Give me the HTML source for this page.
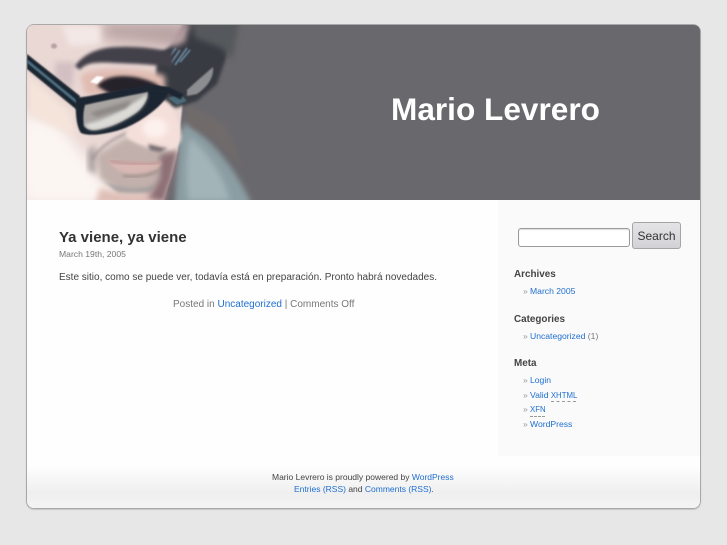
<!DOCTYPE html>
<html><head><meta charset="utf-8"><title>Mario Levrero</title>
<style>
html,body{margin:0;padding:0;width:727px;height:545px;overflow:hidden;background:#e7e7e7;font-family:"Liberation Sans",sans-serif;}
#card{position:absolute;left:26px;top:24px;width:675px;height:485px;background:#fefefe;border-radius:8px;box-shadow:inset 0 0 0 1px #a8a8a8,0 1px 1px #c4c4c4;overflow:hidden;}
#hdr{position:absolute;left:27px;top:25px;width:673px;height:175px;background:#69686d;overflow:hidden;border-radius:6px 6px 0 0;}
#side{position:absolute;left:498px;top:200px;width:202px;height:256px;background:#fafafa;}
#foot{position:absolute;left:27px;top:466px;width:673px;height:42px;background:linear-gradient(#fefefe,#f7f7f8 30%,#efeff0 65%,#f3f3f3);border-radius:0 0 7px 7px;}
.t{position:absolute;white-space:nowrap;line-height:1;filter:blur(.25px);}
a{color:#1f6fd0;text-decoration:none;}
#box{position:absolute;left:518px;top:228px;width:110px;height:17px;border:1px solid #9a9a9a;border-radius:3px;background:#fff;box-shadow:inset 0 1px 1px #ddd;}
#btn{position:absolute;left:632px;top:222px;width:47px;height:25px;border:1px solid #a5a5a8;border-radius:3px;background:linear-gradient(#e4e4e6,#d2d2d6);color:#333;font-size:12px;text-align:center;line-height:26px;filter:blur(.2px);}
.d{position:absolute;height:0;border-top:1px dashed #999;}
</style></head><body>
<div id="card"></div>
<div id="hdr">
<svg width="240" height="175" viewBox="27 25 240 175" style="position:absolute;left:0;top:0">
<defs>
<filter id="b0" x="-30%" y="-30%" width="160%" height="160%"><feGaussianBlur stdDeviation=".8"/></filter>
<filter id="b1" x="-30%" y="-30%" width="160%" height="160%"><feGaussianBlur stdDeviation="1.5"/></filter>
<filter id="b2" x="-30%" y="-30%" width="160%" height="160%"><feGaussianBlur stdDeviation="3"/></filter>
<filter id="b3" x="-40%" y="-40%" width="180%" height="180%"><feGaussianBlur stdDeviation="7"/></filter>
</defs>
<!-- shirt -->
<path d="M175 205L178 135L186 122C205 135 232 160 252 205Z" fill="#8b9ea3" filter="url(#b2)"/>
<path d="M188 200C185 170 187 150 190 138C205 150 222 172 230 200Z" fill="#a3b4b8" filter="url(#b2)"/>
<path d="M186 104L226 125L244 170L215 140L188 125Z" fill="#716b6a" filter="url(#b2)"/>
<!-- skin base -->
<path d="M20 18H190L182 110L178 150L172 175L162 205H20Z" fill="#ead8d4" filter="url(#b0)"/>
<path d="M100 22H190L180 48L130 42L105 40Z" fill="#b8a2a3" filter="url(#b3)"/>
<path d="M62 26L100 26L100 44L70 46Z" fill="#f3e8e6" filter="url(#b2)"/>
<path d="M20 110L60 125L80 150L120 205H20Z" fill="#fcf6f3" filter="url(#b3)"/>
<path d="M27 75L70 112L75 135L30 115Z" fill="#f5e4da" filter="url(#b2)"/>
<ellipse cx="54" cy="46" rx="3" ry="2.6" fill="#b9a2a2" filter="url(#b0)"/>
<path d="M55 62L75 62L72 90L55 78Z" fill="#d2bfc2" filter="url(#b2)"/>
<!-- stubble, jaw -->
<path d="M96 155L127 137L150 148L172 152L168 178L150 194L122 193L100 178Z" fill="#c1b0ab" filter="url(#b2)"/>
<path d="M88 150L95 145L96 175L88 170Z" fill="#aba1a1" filter="url(#b2)"/>
<path d="M103 180C115 188 140 192 155 184L150 193L118 193Z" fill="#a4a0a1" filter="url(#b1)"/>
<path d="M100 188C125 196 145 197 165 190L162 204H95Z" fill="#dfbfb7" filter="url(#b2)"/>
<path d="M160 155L178 150L172 178L164 202L148 198L160 178Z" fill="#8c7076" filter="url(#b2)"/>
<!-- lips -->
<path d="M107 160C125 163 145 162 162 162C158 170 146 174 130 174C118 173 112 166 107 160Z" fill="#d9b7b3" filter="url(#b1)"/>
<path d="M110 161C125 164 145 165 160 163" stroke="#a57270" stroke-width="1.2" fill="none" filter="url(#b1)"/>
<path d="M123 176C135 177 148 176 158 171" stroke="#8a7675" stroke-width="1.5" fill="none" filter="url(#b1)"/>
<path d="M127 133C110 140 97 150 92 160" stroke="#968c8e" stroke-width="2" fill="none" filter="url(#b1)"/>
<!-- dark mass: hair + right lens -->
<path d="M186 20H230L227 55L217 84L197 101L176 108L160 102L155 78L158 55L176 42Z" fill="#383b42" filter="url(#b1)"/>
<path d="M190 18H240L232 60L222 48L195 38Z" fill="#55585b" filter="url(#b2)"/>
<path d="M172 38L185 22H190L185 42L172 48Z" fill="#b69fa2" filter="url(#b2)"/>
<path d="M171 63L180 50M175 65L187 48M170 56L176 48M180 62L190 50" stroke="#6d8ea8" stroke-width="1.6" fill="none" filter="url(#b0)"/>
<path d="M187 90L198 80L213 67C214 75 210 85 197 94L187 96Z" fill="#8b8d90" filter="url(#b0)"/>
<path d="M168 98L177 105L187 101L180 94Z" fill="#4c6a78" filter="url(#b0)"/>
<!-- eyebrow -->
<path d="M75 66C82 56 95 48 115 47C135 46 155 48 172 52L172 68C155 64 135 64 115 63C98 62 86 62 80 70Z" fill="#423f4a" filter="url(#b1)"/>
<path d="M80 75C95 67 125 68 150 71L165 76V92L110 96L85 94Z" fill="#e0bcb2" filter="url(#b2)"/>
<!-- eye -->
<path d="M97 86C105 76 120 75 135 77C145 79 155 82 162 88L110 94Z" fill="#25232b" filter="url(#b1)"/>
<path d="M90 82L97 76L104 77L97 84Z" fill="#fff" filter="url(#b0)"/>
<!-- nose -->
<path d="M152 104C158 98 165 98 170 104C177 118 182 130 181 140C178 148 170 150 160 149C150 147 134 144 126 136C125 130 138 122 152 104Z" fill="#f5dfda" filter="url(#b1)"/>
<ellipse cx="155" cy="128" rx="12" ry="10" fill="#fdf1ee" filter="url(#b2)"/>
<path d="M148 144C156 146 162 148 168 148L160 152L150 150Z" fill="#72686c" filter="url(#b1)"/>
<!-- temple -->
<path d="M27 54L27 69L77 110L80 96Z" fill="#1f2733" filter="url(#b0)"/>
<path d="M27 61L78 103" stroke="#4f7488" stroke-width="2.5" fill="none" filter="url(#b0)"/>
<!-- left lens -->
<path d="M76 98C100 95 125 88 150 85L170 88C168 98 160 106 152 112C142 120 127 129 112 132C100 135 88 136 81 133C77 128 75 115 76 98Z" fill="#1e2532" filter="url(#b0)"/>
<path d="M85 105C103 101 127 96 148 92C148 100 141 110 134 114C122 122 110 127 100 129C93 131 87 130 84 126C83 120 83 112 85 105Z" fill="#a8a4a2" filter="url(#b0)"/>
<path d="M85 124C100 122 122 112 147 94C148 100 141 110 134 114C122 122 110 127 100 129C93 131 87 130 85 124Z" fill="#dcdbd7" filter="url(#b1)"/>
<path d="M90 113C105 108 120 104 132 100L126 108L97 117Z" fill="#8e8886" filter="url(#b1)"/>
<path d="M150 88L168 90L182 97" stroke="#1f2630" stroke-width="6" fill="none" filter="url(#b0)"/>
</svg>
</div>
<div id="side"></div>
<div id="foot"></div>

<div class="t" style="left:391px;top:94px;font-size:31.6px;font-weight:bold;color:#fff;">Mario Levrero</div>

<div class="t" style="left:59px;top:230px;font-size:15px;font-weight:bold;color:#333;">Ya viene, ya viene</div>
<div class="t" style="left:59px;top:250px;font-size:8.6px;color:#777;">March 19th, 2005</div>
<div class="t" style="left:59px;top:271px;font-size:10px;color:#444;margin-top:2px;">Este sitio, como se puede ver, todavía está en preparación. Pronto habrá novedades.</div>
<div class="t" style="left:173px;top:300px;font-size:10px;color:#777;">Posted in <a>Uncategorized</a> | Comments Off</div>

<div id="box"></div>
<div id="btn">Search</div>

<div class="t" style="left:514px;top:270px;font-size:9.9px;font-weight:bold;color:#444;">Archives</div>
<div class="t" style="left:523px;top:287px;font-size:8.6px;color:#999;">»</div>
<div class="t" style="left:530px;top:287px;font-size:8.6px;"><a>March 2005</a></div>

<div class="t" style="left:514px;top:315px;font-size:9.9px;font-weight:bold;color:#444;">Categories</div>
<div class="t" style="left:523px;top:332px;font-size:8.6px;color:#999;">»</div>
<div class="t" style="left:530px;top:331.5px;font-size:8.6px;color:#777;"><a>Uncategorized</a> (1)</div>

<div class="t" style="left:514px;top:359px;font-size:9.9px;font-weight:bold;color:#444;">Meta</div>
<div class="t" style="left:523px;top:376px;font-size:8.6px;color:#999;">»</div>
<div class="t" style="left:530px;top:376px;font-size:8.6px;"><a>Login</a></div>
<div class="t" style="left:523px;top:391px;font-size:8.6px;color:#999;">»</div>
<div class="t" style="left:530px;top:390.5px;font-size:8.6px;"><a>Valid <span style="font-size:7.8px">XHTML</span></a></div>
<div class="d" style="left:551px;top:401px;width:25px;"></div>
<div class="t" style="left:523px;top:405px;font-size:8.6px;color:#999;">»</div>
<div class="t" style="left:530px;top:405.5px;font-size:7.8px;"><a>XFN</a></div>
<div class="d" style="left:530px;top:416px;width:15px;"></div>
<div class="t" style="left:523px;top:420px;font-size:8.6px;color:#999;">»</div>
<div class="t" style="left:530px;top:419.5px;font-size:8.6px;"><a>WordPress</a></div>

<div class="t" style="left:272px;top:472.5px;font-size:8.5px;color:#444;">Mario Levrero is proudly powered by <a>WordPress</a></div>
<div class="t" style="left:294px;top:484.5px;font-size:8.5px;color:#444;"><a>Entries (RSS)</a> and <a>Comments (RSS)</a>.</div>
</body></html>
